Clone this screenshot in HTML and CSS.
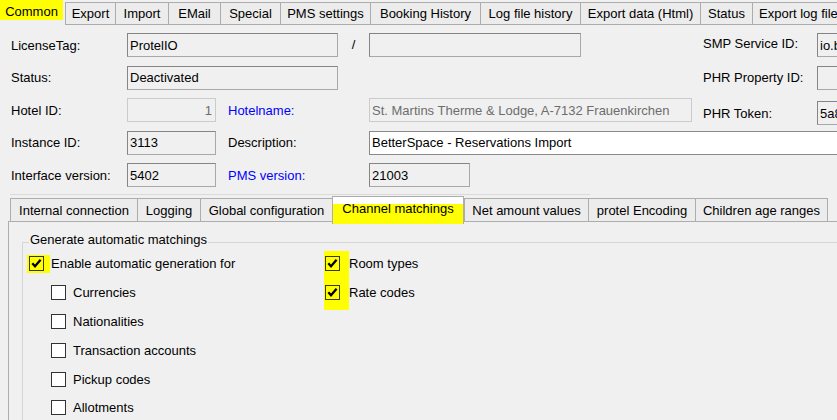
FILE: index.html
```html
<!DOCTYPE html>
<html>
<head>
<meta charset="utf-8">
<title>Interface settings</title>
<link rel="stylesheet" href="styles.css">
</head>
<body>
<div class="maintabs">
  <div class="mtab sel">Common</div>
  <div class="mtab">Export</div>
  <div class="mtab">Import</div>
  <div class="mtab">EMail</div>
  <div class="mtab">Special</div>
  <div class="mtab">PMS settings</div>
  <div class="mtab">Booking History</div>
  <div class="mtab">Log file history</div>
  <div class="mtab">Export data (Html)</div>
  <div class="mtab">Status</div>
  <div class="mtab last">Export log file</div>
</div>

<div class="form">
  <div class="lbl c1">LicenseTag:</div>
  <div class="box c23">ProtelIO</div>
  <div class="slash c4">/</div>
  <div class="box c5 partner"></div>
  <div class="lbl c7 up">SMP Service ID:</div>
  <div class="box c8">io.betterspace</div>

  <div class="lbl c1">Status:</div>
  <div class="box c23">Deactivated</div>
  <div class="lbl c7">PHR Property ID:</div>
  <div class="box c8"></div>

  <div class="lbl c1">Hotel ID:</div>
  <div class="box dis num c2">1</div>
  <div class="lbl c3 blue">Hotelname:</div>
  <div class="box dis c5">St. Martins Therme &amp; Lodge, A-7132 Frauenkirchen</div>
  <div class="lbl c7 low">PHR Token:</div>
  <div class="box c8 low">5a8f3c1e</div>

  <div class="lbl c1">Instance ID:</div>
  <div class="box c2">3113</div>
  <div class="lbl c3">Description:</div>
  <div class="box white c5end">BetterSpace - Reservations Import</div>

  <div class="lbl c1">Interface version:</div>
  <div class="box c2">5402</div>
  <div class="lbl c3 blue">PMS version:</div>
  <div class="box c5 pms">21003</div>
</div>

<div class="rule"></div>

<div class="inner">
  <div class="subtabs">
    <div class="stab">Internal connection</div>
    <div class="stab">Logging</div>
    <div class="stab">Global configuration</div>
    <div class="stab sel">Channel matchings</div>
    <div class="stab">Net amount values</div>
    <div class="stab">protel Encoding</div>
    <div class="stab last">Children age ranges</div>
  </div>
  <div class="page">
    <div class="group">
      <div class="legend">Generate automatic matchings</div>
      <div class="cols">
        <div class="col-left">
          <div class="row">
            <span class="hl-small"><span class="cb on"><svg viewBox="0 0 13 13" width="13" height="13"><polyline points="2.3,6.3 5,9.3 10.6,2.8" fill="none" stroke="#000" stroke-width="2.3"/></svg></span></span>
            <span class="txt-enable">Enable automatic generation for</span>
          </div>
          <div class="row sub"><span class="cb"></span><span>Currencies</span></div>
          <div class="row sub"><span class="cb"></span><span>Nationalities</span></div>
          <div class="row sub"><span class="cb"></span><span>Transaction accounts</span></div>
          <div class="row sub"><span class="cb"></span><span>Pickup codes</span></div>
          <div class="row sub"><span class="cb"></span><span>Allotments</span></div>
        </div>
        <div class="col-right">
          <div class="hl-col">
            <div class="row first"><span class="cb on"><svg viewBox="0 0 13 13" width="13" height="13"><polyline points="2.3,6.3 5,9.3 10.6,2.8" fill="none" stroke="#000" stroke-width="2.3"/></svg></span></div>
            <div class="row"><span class="cb on"><svg viewBox="0 0 13 13" width="13" height="13"><polyline points="2.3,6.3 5,9.3 10.6,2.8" fill="none" stroke="#000" stroke-width="2.3"/></svg></span></div>
          </div>
          <div class="labels">
            <div class="row">Room types</div>
            <div class="row">Rate codes</div>
          </div>
        </div>
      </div>
    </div>
  </div>
</div>
</body>
</html>
```

FILE: styles.css
```css
* { box-sizing: border-box; margin: 0; padding: 0; }

html, body {
  width: 837px;
  height: 420px;
  overflow: hidden;
  background: #f0f0f0;
}

body {
  font-family: "Liberation Sans", Arial, sans-serif;
  font-size: 13px;
  line-height: 15px;
  color: #000;
}

/* ---------- main tab strip ---------- */
.maintabs {
  display: grid;
  grid-template-columns: 65px 50px 53px 52px 60px 90px 110px 100px 120px 52px 110px;
  height: 25px;
  width: 837px;
  overflow: hidden;
}

.mtab {
  margin-top: 2px;
  height: 23px;
  border: 1px solid #acacac;
  border-right: none;
  background: #ececec;
  display: flex;
  align-items: center;
  justify-content: center;
  white-space: nowrap;
  overflow: hidden;
}

.mtab.last {
  border-right: 1px solid #acacac;
  justify-content: flex-start;
  padding-left: 6px;
}

.mtab.sel {
  margin-top: 0;
  height: 25px;
  width: 63px;
  border: none;
  background: linear-gradient(#ffff00 0 20px, #f0f0f0 20px);
  align-items: flex-start;
  padding-top: 4px;
}

/* ---------- form grid ---------- */
.form {
  display: grid;
  grid-template-columns: 116px 89px 122px 31px 323px 11px 114px 200px;
  grid-auto-rows: 24px;
  row-gap: 8.5px;
  padding: 8px 0 0 11px;
  width: 837px;
  overflow: hidden;
}

.c1 { grid-column: 1; }
.c2 { grid-column: 2; }
.c23 { grid-column: 2 / 4; }
.c3 { grid-column: 3; padding-left: 12px; }
.c4 { grid-column: 4; }
.c5 { grid-column: 5; }
.c5end { grid-column: 5 / 9; }
.c7 { grid-column: 7; }
.c8 { grid-column: 8; }

.lbl {
  display: flex;
  align-items: center;
  white-space: nowrap;
}

.lbl.up { padding-bottom: 3px; }

.low { margin-top: 3px; margin-bottom: -3px; }

.blue { color: #0000ff; }

.slash {
  display: flex;
  align-items: center;
  justify-content: center;
  padding-bottom: 2px;
}

.box {
  border: 1px solid #858585;
  border-right-color: #a8a8a8;
  border-bottom-color: #a8a8a8;
  background: #f0f0f0;
  display: flex;
  align-items: center;
  padding-left: 2px;
  white-space: nowrap;
  overflow: hidden;
}

.box.dis {
  border-color: #cbcbcb;
  color: #6d6d6d;
}

.box.num {
  justify-content: flex-end;
  padding-right: 3px;
}

.box.white {
  background: #fff;
  border-color: #8a8a8a;
}

.partner { width: 212px; }
.pms { width: 101px; }

.rule {
  margin: 7px 0 0 10px;
  width: 580px;
  height: 1px;
  background: #dadada;
}

/* ---------- inner tab control ---------- */
.inner {
  margin: 1px 0 0 8px;
}

.subtabs {
  display: grid;
  grid-template-columns: 127px 63px 132px 132px 124px 107px 133px;
  align-items: end;
  height: 26px;
  padding-left: 2px;
  border-bottom: 1px solid #adadad;
}

.stab {
  height: 23px;
  border: 1px solid #adadad;
  border-bottom: none;
  border-right: none;
  background: #ececec;
  display: flex;
  align-items: center;
  justify-content: center;
  white-space: nowrap;
  padding-top: 1px;
}

.stab.last { border-right: 1px solid #adadad; }

.stab.sel {
  height: 28px;
  margin-bottom: -3px;
  border-right: 1px solid #adadad;
  background: linear-gradient(#ffffff 0 7px, #ffff00 7px);
  align-items: flex-start;
  padding-top: 4px;
  position: relative;
  z-index: 1;
}

.page {
  border-left: 1px solid #adadad;
  height: 198px;
  padding-top: 20px;
}

/* ---------- group box ---------- */
.group {
  margin-left: 13px;
  height: 178px;
  border: 1px solid #d5d5d5;
  border-right: none;
  border-bottom: none;
}

.legend {
  width: max-content;
  margin: -11px 0 0 6px;
  padding: 0 1px;
  background: #f0f0f0;
}

.cols {
  display: flex;
  margin-top: 2.6px;
}

.col-left { width: 301px; }

.row {
  height: 28.8px;
  display: flex;
  align-items: center;
  white-space: nowrap;
}

.row.sub {
  padding-left: 28px;
  gap: 7px;
}

.hl-small {
  margin-left: 4px;
  width: 23px;
  height: 18px;
  background: #ffff00;
  display: flex;
  align-items: center;
  padding-left: 2px;
}

.txt-enable { margin-left: 1px; }

.col-right { display: flex; }

.hl-col {
  width: 25px;
  height: 59px;
  margin-top: 1.4px;
  background: #ffff00;
  padding-left: 1px;
}

.hl-col .first { margin-top: -1.4px; }

.cb {
  flex: none;
  width: 15px;
  height: 15px;
  border: 1px solid #333;
  background: #fff;
  display: flex;
  align-items: center;
  justify-content: center;
}

.cb.on {
  background: transparent;
  border-color: #3a3a12;
}
```
